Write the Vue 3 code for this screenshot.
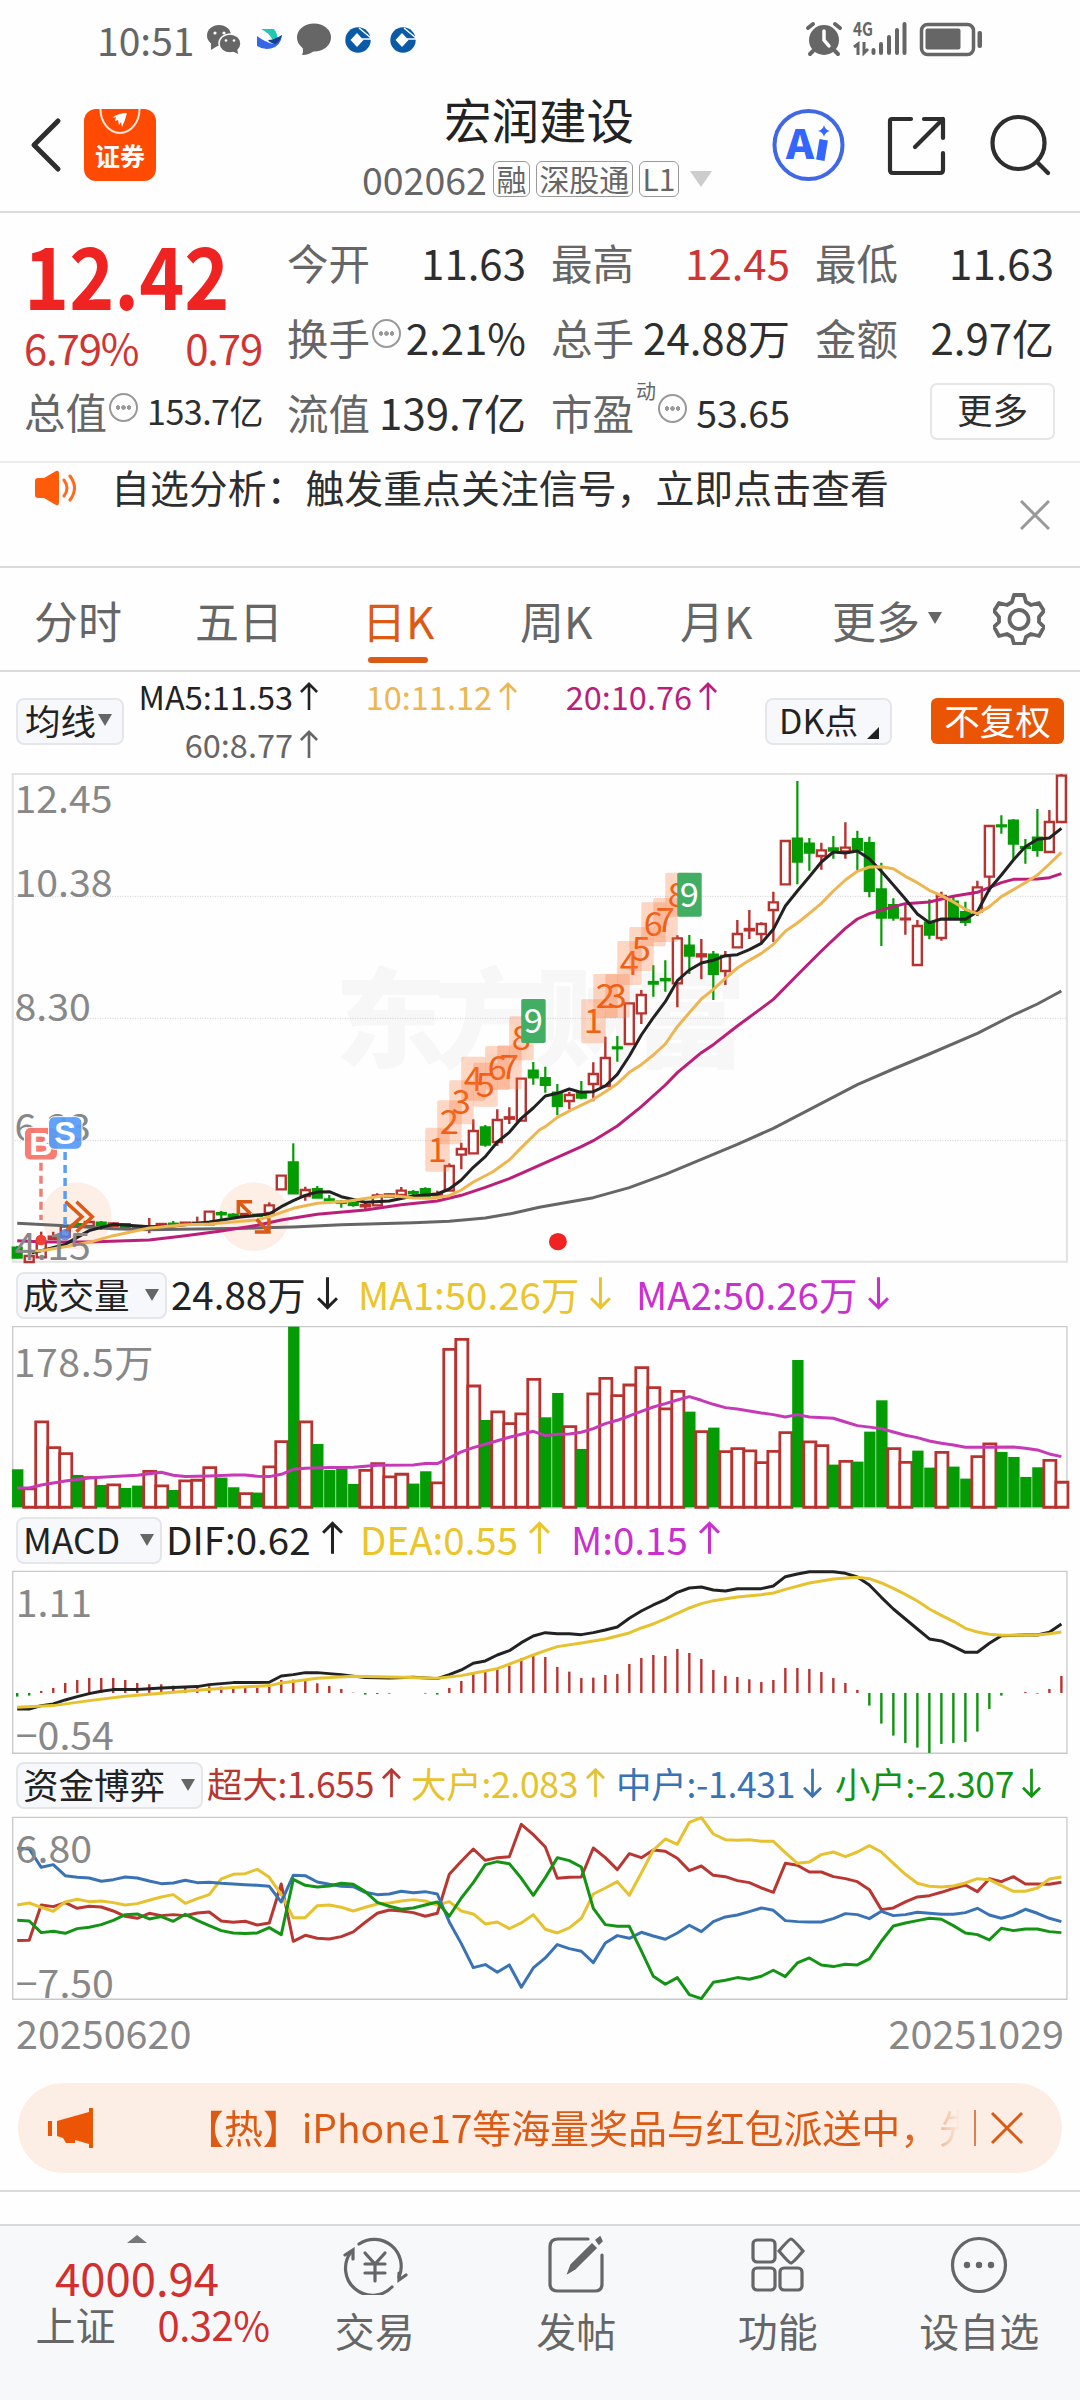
<template>
  <div class="screen">
    <div class="status">
      <span class="clock">10:51</span>
      <svg class="status-left" viewBox="0 0 220 40" width="220" height="40">
        <g fill="#666">
          <ellipse cx="12" cy="16.500" rx="12" ry="10.500" />
          <path d="M4 24 L4 31 L12 26z" />
          <ellipse cx="23" cy="24.500" rx="11" ry="9.500" stroke="#fefefe" stroke-width="1.500" />
          <path d="M25 32 L31 35 L30 29z" />
          <ellipse cx="107" cy="18.500" rx="17" ry="14" />
          <path d="M95 26 Q97 32 95 36 Q103 36 108 31z" />
        </g>
        <g fill="#fefefe">
          <circle cx="8" cy="14" r="1.600" /><circle cx="17" cy="14" r="1.600" />
          <circle cx="19" cy="21.500" r="1.300" /><circle cx="27" cy="21.500" r="1.300" />
        </g>
        <path d="M54 10 h13 q4 5 4 13 l-6 -3 q-3 -6 -11 -10z" fill="#21c8b4" />
        <path d="M50 17 q8 6 16 8 q4 -6 9 -9 q-1 11 -11 13.500 q-8 1.500 -14 -2.500z" fill="#3568e8" />
        <path d="M61 21 q6 0 14 -5 q-2 7 -7 9 q-5 -1 -7 -4z" fill="#173c94" />
        <g v-for="x in [151, 196]" :key="x">
          <circle :cx="x" cy="21" r="12.700" fill="#0a5aa8" />
          <path :d="`M${x - 1} 14 l6.500 7 -6.500 7 -6.500 -7z`" fill="#fefefe" />
          <path :d="`M${x + 4} 20 h10 M${x + 1} 9 L${x + 13} 19 M${x + 6} 7 L${x + 14} 15`" stroke="#fefefe" stroke-width="1.500" />
        </g>
      </svg>
      <span class="grow"></span>
      <svg viewBox="0 0 180 40" width="180" height="40">
        <circle cx="19" cy="21" r="15" fill="#666" />
        <path d="M19 12 v9 l5 6" fill="none" stroke="#fefefe" stroke-width="3.500" stroke-linecap="round" />
        <path d="M3 9 L8 5 M30 5 L35 9 M8 32 l-3 3 M30 32 l3 3" fill="none" stroke="#666" stroke-width="4" stroke-linecap="round" />
        <text x="48" y="17" font-size="19" font-weight="700" fill="#666" textLength="20" lengthAdjust="spacingAndGlyphs">4G</text>
        <path d="M49 28 l4 -3 v11 M59 23 v11 l4 -4" fill="none" stroke="#666" stroke-width="3" />
        <path d="M68.500 31 v3 M76 25 v9 M84 18 v16 M92 11 v23 M99.500 5 v29" stroke="#666" stroke-width="4" stroke-linecap="round" />
        <rect x="116.500" y="5.500" width="52" height="30" rx="6" fill="none" stroke="#666" stroke-width="3.500" />
        <rect x="120.500" y="9.500" width="35" height="21" rx="2" fill="#666" />
        <rect x="172.500" y="12" width="4.500" height="17" rx="2" fill="#666" />
      </svg>
    </div>

    <header class="header">
      <svg class="back" viewBox="0 0 32 56" width="32" height="56"><path d="M28 4 L4 28 L28 52" /></svg>
      <svg class="logo" viewBox="0 0 72 72" width="72" height="72">
        <rect width="72" height="72" rx="12" fill="#ff4a04" />
        <path d="M16.500 0 a19.500 24 0 0 0 39 0" fill="none" stroke="#ffe6dc" stroke-width="2" />
        <path d="M28 9 Q34 4 43 4 Q41 12 38 18 L37 13 L35 16 L34 11 L31 12 L32 8z" fill="#fff" />
        <text x="11" y="57" font-size="25" font-weight="700" fill="#fff">证券</text>
      </svg>
      <div class="title">
        <h1>宏润建设</h1>
        <p>002062<i>融</i><i>深股通</i><i>L1</i><b></b></p>
      </div>
      <svg class="head-icons" viewBox="0 0 290 80" width="290" height="80">
        <circle cx="38.500" cy="40" r="34" fill="none" stroke="#4068e6" stroke-width="4" />
        <text x="16" y="53.500" font-size="40" font-weight="900" fill="#3366ff" textLength="28" lengthAdjust="spacingAndGlyphs">A</text>
        <path d="M53 39 L51 51" stroke="#3366ff" stroke-width="8.500" stroke-linecap="square" />
        <path d="M54 20 Q55 25 60 26 Q55 27 54 32 Q53 27 48 26 Q53 25 54 20z" fill="#3366ff" />
        <g fill="none" stroke="#2e2e2e" stroke-width="4.200" stroke-linecap="round" stroke-linejoin="round">
          <path d="M141 14 H122 Q120 14 120 16 V65 Q120 68 123 68 H170 Q173 68 173 65 V48" />
          <path d="M154 14 H173 V33 M173 14 L145 42" />
          <circle cx="248.500" cy="38" r="26" />
          <path d="M267 57 L278 68" />
        </g>
      </svg>
    </header>

    <section class="quote">
      <div class="quote-main">
        <div class="price"><span>12.42</span></div>
        <div class="change"><span>6.79%</span><span>0.79</span></div>
        <div class="cap"><label>总值</label><em class="info"></em><span>153.7亿</span></div>
      </div>
      <div class="quote-grid">
        <div v-for="cell in cells" :key="cell.label" class="cell">
          <label>{{ cell.label }}</label>
          <sup v-if="cell.sup">{{ cell.sup }}</sup>
          <em v-if="cell.info" class="info"></em>
          <span :class="{ red: cell.red, small: cell.sup }">{{ cell.value }}</span>
        </div>
        <div class="more-wrap"><button class="more">更多</button></div>
      </div>
    </section>

    <section class="notice">
      <svg viewBox="0 0 44 36" width="44" height="36">
        <path d="M1 11 Q1 8 4 8 H10 L22 1 Q25 0 25 4 V32 Q25 36 22 35 L10 28 H4 Q1 28 1 25z" fill="#ff5b0a" />
        <path d="M30 10 q6 8 0 16 M36 6 q9 12 0 24" fill="none" stroke="#ff6a20" stroke-width="3" stroke-linecap="round" />
      </svg>
      <span class="notice-text">自选分析：触发重点关注信号，立即点击查看</span>
      <svg class="notice-close" viewBox="0 0 30 30" width="30" height="30"><path d="M1 1 L29 29 M29 1 L1 29" /></svg>
    </section>

    <nav class="tabs">
      <span v-for="tab in tabs" :key="tab" :class="{ active: tab === '日K' }">
        {{ tab }}<i v-if="tab === '更多'" class="caret"></i>
      </span>
      <svg viewBox="0 0 52 52" width="52" height="52" fill="none" stroke="#666" stroke-width="3.800" stroke-linejoin="round">
        <path d="M21 2 H31 L33 9 L38 12 L46 10 L51 18 L46 24 V29 L51 34 L46 43 L38 41 L33 44 L31 51 H21 L19 44 L14 41 L6 43 L1 34 L6 29 V24 L1 18 L6 10 L14 12 L19 9z" />
        <circle cx="26" cy="26.500" r="9.500" />
      </svg>
    </nav>

    <section class="ma-row">
      <button class="chip ma-chip">均线<i class="caret"></i></button>
      <div class="ma-values">
        <span v-for="ma in averages" :key="ma.text" :style="{ color: ma.color }">
          {{ ma.text }}<svg class="arrow" viewBox="0 0 20 32"><path :d="UP" /></svg>
        </span>
      </div>
      <button class="chip dk-chip">DK点<i class="corner"></i></button>
      <button class="adjust">不复权</button>
    </section>

    <svg class="plot candles" viewBox="0 9 3136 1473" preserveAspectRatio="none">
      <text x="972" y="867" class="mark" textLength="1195">东方财富</text>
      <path class="grid" d="M36 379 H3098 M36 745 H3098 M36 1112 H3098" />
      <rect class="frame thick" x="37" y="12" width="3061" height="1463" />
      <circle cx="223" cy="1338" r="101" fill="#fdeee6" />
      <circle cx="737" cy="1340" r="103" fill="#fdeee6" />

      <g v-for="(c, i) in candles" :key="i" :class="c[0] ? 'rise' : 'fall'">
        <path :d="`M${cx(i)} ${c[1]} V${c[2]} M${cx(i)} ${c[3]} V${c[4]}`" />
        <rect :x="cx(i) - 13" :y="c[2]" width="26" :height="c[3] - c[2]" />
      </g>
      <polyline :points="line(ma60)" class="curve" stroke="#666" />
      <polyline :points="line(ma20)" class="curve" stroke="#bb1f7a" />
      <polyline :points="line(ma5)" class="curve" stroke="#222" />
      <polyline :points="line(ma10)" class="curve" stroke="#eeb650" />

      <path class="signal" d="M190 1295 L238 1340 L190 1385 M222 1295 L268 1340 L222 1385" />
      <path class="signal" d="M692 1332 V1295 H732 M692 1295 L728 1332 M740 1386 H781 V1345 M781 1386 L745 1348" />

      <g class="count">
        <g v-for="(b, k) in counts" :key="k">
          <rect :x="cx(b[0]) - 35" :y="b[2]" width="71" height="132" rx="5" :fill="b[1] === 9 ? '#42ae64' : 'rgba(252, 122, 62, 0.3)'" />
          <text :x="cx(b[0])" :y="b[2] + 102" :fill="b[1] === 9 ? '#fff' : '#f05f14'">{{ b[1] }}</text>
        </g>
      </g>
      <g class="scale">
        <text x="42" y="130">12.45</text>
        <text x="42" y="382">10.38</text>
        <text x="42" y="752">8.30</text>
        <text x="42" y="1114">6.23</text>
        <text x="42" y="1470">4.15</text>
      </g>

      <circle cx="119" cy="1410" r="16" fill="#ef4034" />
      <circle cx="189" cy="1394" r="17" fill="#4f82e8" fill-opacity="0.85" />
      <path d="M119 1178 V1350" stroke="#ef8076" class="drop" />
      <path d="M189 1146 V1380" stroke="#5b9cf5" class="drop" />
      <g class="trade">
        <rect x="71" y="1072" width="96" height="98" rx="18" fill="#f8756a" fill-opacity="0.95" />
        <text x="119" y="1154">B</text>
        <rect x="141" y="1040" width="97" height="98" rx="18" fill="#559bf8" fill-opacity="0.92" />
        <text x="189" y="1122">S</text>
      </g>
      <circle cx="1620" cy="1415" r="26" fill="#f02222" />
    </svg>

    <div class="legend">
      <button class="chip volume-chip">成交量<i class="caret"></i></button>
      <span v-for="item in volumeLegend" :key="item.text" :style="{ color: item.color, width: item.width + 'px' }">
        {{ item.text }}<svg class="arrow" viewBox="0 0 20 32"><path :d="item.up ? UP : DOWN" /></svg>
      </span>
    </div>
    <svg class="plot sub" viewBox="0 198 3136 548" preserveAspectRatio="none">
      <rect class="frame" x="37" y="200" width="3061" height="544" />
      <rect
        v-for="(v, i) in volumes"
        :key="i"
        :class="v[0] ? 'vol-rise' : 'vol-fall'"
        :x="cx(i) - (v[0] ? 16 : 15)"
        :y="v[1]"
        :width="v[0] ? 35 : 33"
        :height="742 - v[1]"
      />
      <polyline :points="line(volumeMa)" class="curve" stroke="#c63ab8" />
      <text x="40" y="350" class="scale" textLength="406">178.5万</text>
    </svg>

    <div class="legend">
      <button class="chip macd-chip">MACD<i class="caret"></i></button>
      <span v-for="item in macdLegend" :key="item.text" :style="{ color: item.color, width: item.width + 'px' }">
        {{ item.text }}<svg class="arrow" viewBox="0 0 20 32"><path :d="item.up ? UP : DOWN" /></svg>
      </span>
    </div>
    <svg class="plot sub" viewBox="0 186 3136 548" preserveAspectRatio="none">
      <rect class="frame" x="37" y="187" width="3061" height="546" />
      <path v-for="(y, i) in macdBars" :key="i" :d="`M${cx(i)} 552 V${y}`" class="tick" :stroke="y < 552 ? '#b9322f' : '#0d940d'" />
      <polyline :points="line(dif)" class="curve" stroke="#222" />
      <polyline :points="line(dea)" class="curve" stroke="#e6c22f" />
      <g class="scale">
        <text x="46" y="325">1.11</text>
        <text x="46" y="724">−0.54</text>
      </g>
    </svg>

    <div class="legend tight">
      <button class="chip fund-chip">资金博弈<i class="caret"></i></button>
      <span v-for="item in fundLegend" :key="item.text" :style="{ color: item.color, width: item.width + 'px' }">
        {{ item.text }}<svg class="arrow" viewBox="0 0 20 32"><path :d="item.up ? UP : DOWN" /></svg>
      </span>
    </div>
    <svg class="plot sub" viewBox="0 204 3136 548" preserveAspectRatio="none">
      <rect class="frame" x="37" y="205" width="3061" height="546" />
      <polyline :points="line(funds.huge)" class="curve" stroke="#b83733" />
      <polyline :points="line(funds.large)" class="curve" stroke="#e6c22f" />
      <polyline :points="line(funds.middle)" class="curve" stroke="#3a73b5" />
      <polyline :points="line(funds.small)" class="curve" stroke="#149414" />
      <g class="scale">
        <text x="46" y="342">6.80</text>
        <text x="46" y="746">−7.50</text>
      </g>
    </svg>

    <div class="dates"><span>20250620</span><span>20251029</span></div>

    <div class="banner">
      <svg class="horn" viewBox="0 0 46 40" width="46" height="40" fill="#ec5504">
        <path d="M0 13 h4 v15 h-4z M9 13 L41 4 V0 H45 V40 H41 V36 L27 32 V35 H18 L15 30 L9 28z" />
      </svg>
      <div class="banner-text">【热】iPhone17等海量奖品与红包派送中，先到先得</div>
      <i class="divider"></i>
      <svg viewBox="0 0 34 34" width="34" height="34"><path d="M2 2 L32 32 M32 2 L2 32" stroke="#dc5a14" stroke-width="3" /></svg>
    </div>
    <div class="rule"></div>

    <footer class="bottom">
      <div class="index">
        <i class="up-caret"></i>
        <strong>4000.94</strong>
        <p><span>上证</span><b>0.32%</b></p>
      </div>
      <div class="action">
        <svg viewBox="0 0 66 60" width="66" height="60">
          <path d="M17 9 A27 27 0 0 1 57 42 M50 52 A27 27 0 0 1 9 17" />
          <path d="M3 20 L11 15 L11 24 M64 40 L57 45 V38" />
          <path d="M23 18 L33 29 L43 18 M33 29 V46 M23 29 H43 M23 38 H43" />
        </svg>
        <span>交易</span>
      </div>
      <div class="action">
        <svg viewBox="0 0 60 60" width="60" height="60">
          <path d="M42 4 H12 Q4 4 4 12 V49 Q4 56 12 56 H49 Q56 56 56 49 V20" />
          <path d="M22 38 L25 30 L46 9 L50 13 L29 34z M50 5 L54 2 L56 6 L53 9z" fill="#666" stroke-width="1.500" />
        </svg>
        <span>发帖</span>
      </div>
      <div class="action">
        <svg viewBox="0 0 60 60" width="60" height="60">
          <rect x="5" y="5" width="22" height="22" rx="4" />
          <rect x="5" y="33" width="22" height="22" rx="4" />
          <rect x="32" y="33" width="22" height="22" rx="4" />
          <path d="M43 4 Q45 4 55 16 Q45 28 43 28 Q41 28 31 16 Q41 4 43 4z" />
        </svg>
        <span>功能</span>
      </div>
      <div class="action">
        <svg viewBox="0 0 60 60" width="60" height="60">
          <circle cx="30" cy="30" r="26.500" />
          <g fill="#666" stroke="none"><circle cx="18" cy="30" r="3.200" /><circle cx="30" cy="30" r="3.200" /><circle cx="42" cy="30" r="3.200" /></g>
        </svg>
        <span>设自选</span>
      </div>
    </footer>
  </div>
</template>

<script setup>
const UP = 'M10 31 V2 M1 11 L10 2 L19 11';
const DOWN = 'M10 1 V30 M1 21 L10 30 L19 21';

const cells = [
  { label: '今开', value: '11.63' },
  { label: '最高', value: '12.45', red: true },
  { label: '最低', value: '11.63' },
  { label: '换手', value: '2.21%', info: true },
  { label: '总手', value: '24.88万' },
  { label: '金额', value: '2.97亿' },
  { label: '流值', value: '139.7亿' },
  { label: '市盈', value: '53.65', sup: '动', info: true }
];

const tabs = ['分时', '五日', '日K', '周K', '月K', '更多'];

const averages = [
  { text: 'MA5:11.53', color: '#222' },
  { text: '10:11.12', color: '#eeb650' },
  { text: '20:10.76', color: '#bb1f7a' },
  { text: '60:8.77', color: '#666' }
];

const volumeLegend = [
  { text: '24.88万', color: '#222', width: 187 },
  { text: 'MA1:50.26万', color: '#eac52c', width: 278 },
  { text: 'MA2:50.26万', color: '#c930cf', width: 270 }
];

const macdLegend = [
  { text: 'DIF:0.62', color: '#222', width: 194, up: true },
  { text: 'DEA:0.55', color: '#eac52c', width: 211, up: true },
  { text: 'M:0.15', color: '#c930cf', width: 160, up: true }
];

const fundLegend = [
  { text: '超大:1.655', color: '#b83733', width: 204, up: true },
  { text: '大户:2.083', color: '#e6c22f', width: 205, up: true },
  { text: '中户:-1.431', color: '#3a73b5', width: 219 },
  { text: '小户:-2.307', color: '#149414', width: 210 }
];

// drawing units: about three per pixel, one trading day every 34.85
const cx = (i) => +(50 + 34.85 * i).toFixed(1);

const line = (points) => points
  .map((p, i) => (Array.isArray(p) ? `${cx(p[0])},${p[1]}` : `${cx(i)},${p}`))
  .join(' ');

// [rise, high, body top, body bottom, low]
const candles = [
  [0, 1428, 1433, 1463, 1465], [1, 1458, 1458, 1476, 1476], [1, 1385, 1415, 1462, 1462], [1, 1385, 1400, 1407, 1410],
  [1, 1352, 1370, 1400, 1400], [0, 1352, 1362, 1370, 1372], [1, 1355, 1356, 1368, 1368], [0, 1353, 1358, 1367, 1380],
  [1, 1358, 1360, 1369, 1370], [0, 1360, 1362, 1374, 1376], [0, 1366, 1368, 1373, 1376], [1, 1344, 1370, 1372, 1390],
  [1, 1360, 1362, 1368, 1368], [0, 1353, 1361, 1367, 1370], [1, 1357, 1358, 1364, 1364], [1, 1340, 1358, 1362, 1362],
  [1, 1325, 1325, 1363, 1363], [0, 1323, 1329, 1333, 1347], [0, 1330, 1334, 1338, 1347], [1, 1330, 1332, 1338, 1338],
  [0, 1332, 1334, 1338, 1340], [1, 1297, 1306, 1329, 1329], [1, 1216, 1217, 1258, 1258], [0, 1120, 1177, 1270, 1270],
  [1, 1250, 1260, 1278, 1292], [0, 1248, 1257, 1283, 1284], [0, 1275, 1288, 1291, 1296], [0, 1290, 1295, 1299, 1313],
  [0, 1295, 1299, 1305, 1310], [1, 1297, 1305, 1309, 1320], [1, 1270, 1276, 1306, 1308], [1, 1270, 1273, 1280, 1280],
  [1, 1251, 1262, 1275, 1275], [0, 1260, 1266, 1270, 1277], [0, 1252, 1257, 1278, 1280], [1, 1262, 1272, 1276, 1276],
  [1, 1180, 1188, 1262, 1262], [1, 1118, 1137, 1154, 1198], [1, 1048, 1083, 1150, 1150], [0, 1065, 1072, 1124, 1130],
  [1, 1018, 1050, 1116, 1128], [1, 1012, 1042, 1046, 1062], [1, 925, 926, 1052, 1052], [0, 876, 902, 922, 944],
  [0, 890, 924, 945, 968], [0, 942, 968, 1008, 1036], [1, 965, 975, 993, 1018], [0, 933, 968, 983, 988],
  [1, 877, 912, 942, 994], [1, 800, 864, 948, 948], [0, 798, 832, 835, 875], [1, 700, 700, 822, 822],
  [1, 660, 675, 730, 762], [0, 586, 636, 641, 680], [0, 571, 627, 631, 665], [1, 496, 505, 640, 712],
  [0, 495, 527, 557, 612], [1, 507, 553, 559, 628], [0, 543, 554, 612, 690], [1, 543, 558, 603, 645],
  [1, 450, 492, 532, 532], [1, 420, 477, 481, 507], [1, 457, 462, 492, 520], [1, 365, 397, 420, 516],
  [1, 212, 213, 343, 343], [0, 33, 206, 275, 343], [0, 204, 221, 248, 302], [1, 218, 241, 258, 299],
  [0, 198, 235, 242, 266], [1, 157, 233, 244, 266], [0, 182, 207, 240, 300], [0, 200, 219, 363, 382],
  [0, 278, 358, 443, 528], [0, 385, 405, 443, 452], [1, 400, 446, 448, 494], [1, 450, 468, 585, 588],
  [0, 388, 458, 494, 508], [1, 365, 378, 504, 512], [0, 375, 395, 443, 448], [0, 395, 426, 456, 468],
  [1, 332, 352, 425, 438], [1, 167, 168, 320, 365], [0, 136, 166, 169, 191], [0, 147, 152, 221, 270],
  [0, 207, 231, 234, 281], [0, 117, 203, 240, 260], [1, 120, 156, 246, 248], [1, 12, 17, 156, 156]
];

const ma5 = [
  [1.2, 1448], [2, 1442], [4, 1423], [5, 1402], [6, 1382], [8, 1363], [11, 1370], [13, 1368], [14.6, 1362], [16, 1356],
  [18.6, 1341], [20, 1336], [21, 1332], [22, 1310], [23, 1292], [24, 1276], [25, 1266], [26, 1265], [27, 1280],
  [29, 1297], [31, 1293], [33, 1278], [35, 1272], [36, 1257], [37, 1230], [38, 1192], [39, 1160], [40, 1116],
  [41, 1087], [42, 1045], [43, 1014], [44, 978], [45, 970], [46, 957], [47, 967], [48, 965], [49, 948], [50, 913],
  [51, 858], [52, 795], [53, 743], [54, 695], [55, 632], [56, 600], [57, 579], [58, 571], [59, 557], [60, 554],
  [61, 539], [62, 520], [63, 478], [64, 408], [65, 363], [66, 320], [67, 276], [68, 246], [69, 249], [70, 243],
  [71, 266], [72, 304], [73, 345], [74, 387], [75, 432], [76, 458], [77, 447], [79, 448], [80, 425], [81, 358],
  [82, 315], [83, 270], [84, 230], [85, 208], [86, 204], [87, 175]
];

const ma10 = [
  [0.5, 1444], [2, 1442], [4, 1430], [6, 1417], [8, 1397], [11, 1374], [14, 1364], [16, 1362], [20, 1350], [21, 1340],
  [23, 1315], [25, 1300], [27.5, 1294], [30.4, 1278], [31.6, 1278], [33, 1284], [34.5, 1285], [36, 1277], [37, 1260],
  [38, 1236], [39.6, 1206], [41, 1170], [42, 1133], [43.5, 1080], [44, 1070], [45, 1042], [46, 1023], [48, 988],
  [49, 965], [50, 941], [51, 907], [52, 884], [53, 855], [54, 822], [55, 770], [56, 728], [57, 687], [58, 658],
  [59, 625], [60, 594], [61, 571], [62, 550], [63, 523], [64, 484], [65, 459], [66, 430], [67, 400], [68, 363],
  [69, 330], [70, 304], [71, 291], [72, 290], [73, 296], [74, 319], [75, 338], [76, 361], [77, 377], [78, 396],
  [79, 418], [80, 431], [81, 410], [82, 380], [84, 338], [85, 315], [86, 282], [87, 247]
];

const ma20 = [
  [0, 1412], [2.3, 1416], [6.6, 1415], [11, 1410], [14, 1397], [17, 1383], [20, 1366], [22, 1350], [25, 1333],
  [29, 1320], [32, 1304], [35, 1293], [37, 1276], [39, 1252], [41, 1226], [42, 1210], [43.5, 1186], [45, 1162],
  [47, 1130], [48, 1112], [50, 1068], [52, 1010], [54, 945], [55, 908], [57, 848], [58, 824], [60, 768], [62, 715],
  [63, 688], [65, 615], [67, 543], [69, 475], [70, 447], [71, 431], [73, 410], [74, 401], [76, 396], [78, 379],
  [80, 367], [82, 338], [83, 328], [85, 327], [86, 323], [87, 311]
];

const ma60 = [
  [0, 1360], [4, 1367], [8, 1376], [11, 1379], [19, 1375], [23, 1371], [27, 1364], [33, 1358], [36, 1354],
  [39, 1344], [41.3, 1330], [43.5, 1312], [48, 1283], [51, 1253], [54, 1213], [57, 1168], [60, 1123], [63, 1075],
  [67, 1000], [70, 944], [73, 897], [76, 852], [80, 790], [83, 735], [85, 702], [87, 663]
];

// [day, number, top]
const counts = [
  [35, 1, 1073], [36, 2, 991], [37, 3, 931], [38, 4, 860], [39, 5, 878], [40, 6, 828], [41, 7, 826], [42, 8, 739], [43, 9, 687],
  [48, 1, 688], [49, 2, 612], [50, 3, 612], [51, 4, 513], [52, 5, 471], [53, 6, 397], [54, 7, 384], [55, 8, 308], [56, 9, 308]
];

// [rise, top]
const volumes = [
  [0, 628], [1, 687], [1, 486], [1, 563], [1, 581], [0, 645], [1, 653], [0, 675], [1, 675], [0, 684], [0, 677],
  [1, 634], [1, 678], [0, 690], [1, 663], [1, 661], [1, 623], [0, 653], [0, 682], [1, 701], [0, 698], [1, 621],
  [1, 545], [0, 200], [1, 486], [0, 552], [0, 630], [0, 626], [0, 672], [1, 631], [1, 611], [1, 651], [1, 643],
  [0, 671], [0, 634], [1, 669], [1, 268], [1, 238], [1, 378], [0, 480], [1, 456], [1, 491], [1, 462], [1, 358],
  [0, 472], [0, 399], [1, 500], [0, 567], [1, 402], [1, 355], [1, 407], [1, 375], [1, 323], [1, 383], [1, 447],
  [1, 394], [0, 455], [1, 515], [0, 503], [1, 575], [1, 566], [1, 573], [1, 608], [1, 574], [1, 518], [0, 300],
  [1, 546], [1, 557], [0, 614], [1, 604], [0, 605], [0, 515], [0, 421], [1, 566], [1, 607], [0, 572], [0, 623],
  [1, 577], [0, 620], [0, 656], [1, 590], [1, 552], [0, 576], [0, 591], [0, 651], [0, 622], [1, 601], [1, 667]
];

const volumeMa = [
  [0, 684], [1, 684], [2, 675], [4, 663], [6, 654], [8, 650], [10, 646], [12, 637], [13, 646], [14, 650], [16, 648],
  [18, 645], [19, 645], [20, 649], [21, 650], [22, 643], [23, 628], [24, 625], [26, 623], [28, 622], [30, 616],
  [33, 615], [34, 611], [35, 611], [36, 594], [37, 576], [38, 563], [39, 553], [41, 532], [43, 514], [44, 527],
  [45, 523], [46, 522], [47, 517], [48, 506], [49, 491], [50, 481], [51, 468], [52, 454], [53, 441], [54, 431],
  [55, 420], [56, 410], [57, 421], [58, 433], [59, 443], [60, 447], [62, 459], [63, 464], [64, 471], [65, 464],
  [66, 471], [68, 475], [69, 486], [70, 497], [72, 506], [73, 516], [74, 526], [75, 533], [76, 543], [77, 550],
  [78, 555], [79, 562], [80, 562], [83, 561], [84, 565], [85, 570], [86, 582], [87, 590]
];

const macdBars = [
  563, 560, 546, 537, 522, 513, 507, 507, 507, 513, 522, 526, 526, 530, 532, 530, 532, 533, 532, 534, 536, 530,
  513, 512, 513, 523, 531, 540, 551, 557, 555, 554, 552, 552, 554, 557, 537, 516, 492, 489, 478, 470, 448, 437,
  444, 474, 488, 507, 506, 498, 495, 465, 447, 438, 441, 420, 432, 450, 483, 501, 504, 511, 519, 513, 477, 477,
  480, 489, 507, 522, 543, 590, 644, 680, 702, 716, 732, 705, 702, 699, 668, 600, 560, 552, 549, 554, 540, 501
];

const dif = [
  [0, 600], [1, 600], [2, 590], [3, 585], [4, 573], [5, 563], [6, 554], [7, 547], [8, 542], [10, 542], [12, 537],
  [15, 533], [16, 527], [18, 521], [21, 520], [22, 501], [23, 497], [24, 491], [25, 491], [27, 497], [29, 506],
  [31, 507], [33, 505], [35, 509], [36, 497], [37, 483], [38, 463], [39, 456], [40, 438], [41, 425], [42, 401],
  [43, 381], [44, 371], [45, 374], [46, 374], [47, 377], [48, 371], [49, 363], [50, 354], [51, 328], [52, 306],
  [53, 288], [54, 272], [55, 250], [56, 237], [57, 234], [58, 243], [59, 246], [60, 239], [62, 239], [63, 231],
  [64, 203], [65, 195], [66, 188], [68, 188], [69, 193], [70, 204], [71, 228], [72, 265], [73, 300], [74, 330],
  [75, 360], [76, 390], [77, 396], [78, 412], [79, 430], [80, 430], [81, 403], [82, 380], [84, 378], [85, 378],
  [86, 370], [87, 345]
];

const dea = [
  [0, 595], [3, 590], [6, 575], [9, 562], [12, 553], [15, 544], [18, 536], [21, 530], [22, 522], [25, 508],
  [28, 502], [32, 505], [35, 508], [37, 500], [38, 493], [40, 479], [42, 452], [43, 438], [44, 425], [45, 413],
  [47, 402], [49, 390], [51, 372], [52, 357], [53, 345], [54, 330], [55, 313], [56, 297], [57, 284], [58, 275],
  [60, 264], [62, 257], [63, 252], [64, 241], [66, 222], [68, 210], [70, 205], [71, 209], [72, 222], [73, 238],
  [74, 256], [75, 276], [76, 300], [77, 319], [78, 337], [79, 358], [80, 369], [81, 376], [82, 379], [85, 378],
  [86, 374], [87, 369]
];

const funds = {
  huge: [
    575, 574, 468, 473, 461, 478, 472, 474, 486, 502, 508, 493, 500, 497, 500, 492, 489, 516, 520, 517, 528, 522,
    405, 577, 559, 568, 570, 563, 549, 520, 493, 483, 486, 491, 502, 493, 376, 337, 300, 334, 326, 323, 226, 257,
    294, 388, 385, 384, 297, 326, 362, 314, 326, 303, 307, 328, 365, 351, 379, 383, 395, 401, 417, 430, 343, 349,
    369, 369, 383, 389, 398, 422, 482, 477, 459, 444, 440, 430, 418, 408, 428, 389, 398, 383, 405, 405, 406, 400
  ],
  large: [
    468, 462, 475, 487, 459, 451, 458, 456, 461, 468, 464, 454, 444, 437, 463, 449, 437, 390, 376, 374, 361, 385,
    437, 506, 506, 470, 468, 475, 486, 475, 465, 462, 456, 452, 456, 468, 458, 486, 495, 525, 519, 539, 522, 497,
    541, 552, 537, 508, 435, 417, 398, 439, 372, 303, 270, 286, 220, 206, 255, 272, 274, 272, 277, 277, 311, 343,
    339, 317, 309, 323, 309, 290, 309, 343, 376, 403, 412, 414, 411, 402, 389, 392, 410, 427, 427, 417, 390, 384
  ],
  middle: [
    298, 300, 355, 347, 380, 385, 387, 397, 392, 384, 387, 396, 404, 402, 394, 401, 400, 403, 405, 407, 409, 412,
    459, 379, 380, 399, 406, 412, 413, 430, 437, 435, 427, 431, 428, 435, 519, 584, 656, 647, 670, 648, 715, 657,
    627, 587, 599, 607, 641, 582, 560, 568, 550, 561, 571, 552, 529, 548, 518, 504, 498, 488, 477, 484, 515, 518,
    519, 519, 509, 494, 497, 509, 487, 500, 497, 490, 493, 496, 496, 491, 478, 498, 508, 498, 481, 493, 508, 518
  ],
  small: [
    514, 516, 551, 547, 553, 539, 535, 527, 514, 497, 495, 510, 503, 517, 496, 514, 530, 545, 552, 554, 552, 536,
    557, 391, 409, 414, 411, 403, 406, 428, 460, 472, 481, 477, 468, 459, 502, 447, 401, 347, 338, 344, 388, 439,
    386, 326, 335, 354, 478, 527, 532, 532, 606, 682, 706, 686, 737, 749, 700, 694, 686, 691, 682, 664, 683, 642,
    627, 648, 653, 646, 648, 630, 577, 531, 522, 515, 508, 511, 530, 552, 557, 573, 538, 545, 540, 540, 548, 551
  ]
};
</script>

<style>
body {
  margin: 0;
  background: #fefefe;
}
</style>

<style scoped>
.screen {
  width: 1080px;
  height: 2400px;
  overflow: hidden;
  background: #fefefe;
  color: #2e2e2e;
  font-family: "Noto Sans CJK SC", sans-serif;
  display: flex;
  flex-direction: column;
}

.screen > * {
  flex: none;
  box-sizing: border-box;
}

.screen * {
  white-space: nowrap;
}

svg {
  display: block;
  flex: none;
}

i,
em {
  font-style: normal;
}

button {
  font-family: inherit;
  padding: 0;
  color: inherit;
}

.grow {
  flex: 1;
}

.status {
  height: 78px;
  padding: 0 95px 0 97px;
  display: flex;
  align-items: center;
}

.clock {
  font-size: 39px;
  color: #666;
  line-height: 40px;
  width: 110px;
}

.header {
  height: 135px;
  border-bottom: 2px solid #dadada;
  padding-left: 30px;
  display: flex;
}

.back {
  margin-top: 39px;
  fill: none;
  stroke: #2e2e2e;
  stroke-width: 5;
  stroke-linecap: round;
  stroke-linejoin: round;
}

.logo {
  margin: 31px 0 0 22px;
}

.title {
  width: 609px;
  height: 133px;
  text-align: center;
}

.title h1 {
  margin: 14px 0 0 160px;
  font-size: 47.500px;
  font-weight: 400;
  line-height: 54px;
  color: #222;
  text-align: left;
  padding-left: 128px;
}

.title p {
  margin: 15px 0 0 206px;
  display: flex;
  align-items: center;
  gap: 6px;
  font-size: 37.500px;
  line-height: 36px;
  color: #666;
}

.title p i {
  box-sizing: border-box;
  height: 36px;
  border: 1.500px solid #999;
  border-radius: 6px;
  padding: 0 2.500px;
  font-size: 30px;
  line-height: 32px;
}

.title p b {
  margin-left: 5px;
  border: 11px solid transparent;
  border-top: 16px solid #ccc;
  border-bottom: 0;
}

.head-icons {
  margin: 27px 0 0 5px;
}

.quote {
  height: 250px;
  border-bottom: 2px solid #ececec;
  padding: 11px 26px 0 24px;
  display: flex;
}

.quote-main {
  width: 265px;
}

.price {
  height: 103px;
  color: #f02323;
  font-size: 86px;
  font-weight: 700;
  line-height: 98px;
}

.price span {
  display: inline-block;
  transform: scaleX(0.89);
  transform-origin: 0 50%;
}

.change {
  width: 238px;
  display: flex;
  justify-content: space-between;
  font-size: 42px;
  line-height: 40px;
  letter-spacing: -1.200px;
  color: #d23434;
}

.cap {
  width: 239px;
  margin-top: 22px;
  display: flex;
  align-items: center;
  line-height: 44px;
}

.cap span {
  margin-left: auto;
  font-size: 34px;
  letter-spacing: -0.500px;
}

label {
  color: #666;
  font-size: 41.500px;
}

.info {
  box-sizing: border-box;
  width: 29px;
  height: 29px;
  border: 2px solid #999;
  border-radius: 50%;
  margin: -7px 0 0 2px;
  background:
    radial-gradient(circle at 7px 50%, #999 2px, transparent 2.500px),
    radial-gradient(circle at 12.500px 50%, #999 2px, transparent 2.500px),
    radial-gradient(circle at 18px 50%, #999 2px, transparent 2.500px);
}

.quote-grid {
  flex: 1;
  display: grid;
  grid-template-columns: 239px 239px 239px;
  grid-template-rows: 75px 75px 75px;
  column-gap: 25px;
}

.cell {
  display: flex;
  align-items: center;
  font-size: 42px;
}

.cell span {
  margin-left: auto;
}

.cell .small {
  font-size: 37.500px;
}

.cell sup {
  font-size: 20px;
  line-height: 20px;
  color: #666;
  margin: -42px 0 0 2px;
}

.red {
  color: #d23434;
}

.more-wrap {
  display: flex;
  align-items: center;
  justify-content: flex-end;
}

.more {
  width: 125px;
  height: 57px;
  border: 2px solid #e6e6e6;
  border-radius: 7px;
  background: transparent;
  font-size: 35.500px;
  line-height: 46px;
  padding-bottom: 5px;
  margin: 0 -1px 0 0;
}

.notice {
  height: 105px;
  border-bottom: 2px solid #dadada;
  padding: 7px 30px 0 34px;
  display: flex;
}

.notice-text {
  margin: -3px 0 0 33px;
  font-size: 38.900px;
  line-height: 38px;
  flex: 1;
}

.notice-close {
  margin-top: 30px;
  stroke: #999;
  stroke-width: 3;
}

.tabs {
  height: 104px;
  border-bottom: 2px solid #dadada;
  padding-left: 34px;
  display: grid;
  grid-template-columns: 161px 167px 158px 160px 152px 161px 60px;
  align-items: center;
  font-size: 44px;
  line-height: 56px;
  color: #666;
}

.tabs span {
  display: flex;
  align-items: center;
  position: relative;
  margin-top: 1px;
}

.tabs .active {
  color: #dc5a14;
}

.tabs .active::after {
  content: '';
  position: absolute;
  left: 6px;
  bottom: -15px;
  width: 60px;
  height: 6px;
  border-radius: 3px;
  background: #dc5a14;
}

.caret {
  display: inline-block;
  border: 7.500px solid transparent;
  border-top: 12px solid #666;
  border-bottom: 0;
}

.tabs .caret {
  margin: -3px 0 0 8px;
}

.ma-row {
  height: 102px;
  padding: 26px 16px 0;
  display: flex;
  align-items: flex-start;
}

.chip {
  box-sizing: border-box;
  height: 47px;
  border: 2px solid #e4e6ea;
  border-radius: 8px;
  background: #f7f8fb;
  color: #222;
  font-size: 35.500px;
  line-height: 40px;
  padding: 0 6px 3px 5px;
  display: flex;
  align-items: center;
  flex: none;
}

.legend .caret {
  margin: 2px 0 0 auto;
}

.volume-chip {
  width: 151px;
}

.macd-chip {
  width: 146px;
}

.fund-chip {
  width: 187px;
}

.ma-chip {
  width: 108px;
  padding: 0 0 3px 7px;
}

.ma-chip .caret {
  margin-left: 2px;
}

.ma-values {
  margin: -26px 0 0 14px;
  display: grid;
  grid-template-columns: 180px 199px 200px;
  justify-items: end;
  font-size: 32.500px;
  line-height: 48px;
  width: 580px;
}

.ma-values span {
  display: flex;
  align-items: center;
}

.arrow {
  width: 21px;
  height: 34px;
  margin-left: 11px;
  fill: none;
  stroke: currentColor;
  stroke-width: 2.900;
}

.ma-values .arrow {
  width: 18px;
  height: 29px;
  margin-left: 7px;
}

.dk-chip {
  width: 127px;
  margin-left: 47px;
  padding: 0 0 3px 12px;
  font-size: 34px;
}

.corner {
  margin: 25px 0 0 9px;
  border-left: 12px solid transparent;
  border-bottom: 12px solid #222;
}

.adjust {
  width: 133px;
  height: 46px;
  margin-left: 39px;
  border: 0;
  border-radius: 6px;
  background: #ea5504;
  color: #fff;
  font-size: 35.500px;
  line-height: 40px;
  padding-bottom: 3px;
  flex: none;
}

.plot {
  width: 1080px;
  overflow: visible;
}

.candles {
  height: 491px;
  margin-top: -1px;
}

.sub {
  height: 182.600px;
}

.plot * {
  vector-effect: non-scaling-stroke;
}

.frame {
  fill: none;
  stroke: #c9c9c9;
  stroke-width: 1.300;
}

.thick {
  stroke: #e2e2e2;
  stroke-width: 2;
}

.grid {
  stroke: #cfcfcf;
  stroke-width: 1;
  stroke-dasharray: 1 1.500;
}

.mark {
  font-size: 325px;
  font-weight: 900;
  fill: #f7f7f7;
}

.scale {
  font-size: 114px;
  fill: #888;
}

.curve {
  fill: none;
  stroke-width: 3;
  stroke-linejoin: round;
}

.rise path,
.rise rect {
  stroke: #b9322f;
  stroke-width: 2.400;
  fill: #fefefe;
}

.fall path,
.fall rect {
  stroke: #049c04;
  stroke-width: 2.200;
  fill: #049c04;
}

.vol-rise {
  fill: #fefefe;
  stroke: #b9322f;
  stroke-width: 2.800;
}

.vol-fall {
  fill: #049c04;
}

.tick {
  stroke-width: 2.400;
}

.signal {
  fill: none;
  stroke: #dc5a14;
  stroke-width: 3.500;
}

.drop {
  stroke-width: 3.500;
  stroke-dasharray: 8 5;
}

.count text {
  font-size: 100px;
  text-anchor: middle;
}

.trade rect {
  stroke: #fff;
  stroke-width: 1;
}

.trade text {
  font-family: "Liberation Sans", sans-serif;
  font-size: 94px;
  font-weight: 700;
  fill: #fff;
  text-anchor: middle;
}

.legend {
  height: 62.400px;
  padding: 0 16px 0;
  display: flex;
  align-items: center;
  font-size: 38.500px;
  line-height: 46px;
}

.legend .chip {
  margin-right: 4px;
}

.legend span {
  display: flex;
  align-items: center;
  flex: none;
  margin-top: -4px;
}

.tight {
  height: 63px;
  font-size: 35.500px;
  letter-spacing: -0.300px;
}

.tight .arrow {
  width: 19px;
  margin-left: 8px;
}

.dates {
  height: 83px;
  padding: 9px 16px 0;
  display: flex;
  justify-content: space-between;
  font-size: 39.500px;
  line-height: 46px;
  color: #888;
}

.banner {
  height: 90px;
  margin: 0 18px;
  border-radius: 45px;
  background: #fceee4;
  padding: 0 38px 0 30px;
  display: flex;
  align-items: center;
  color: #dc5a14;
  font-size: 39px;
  line-height: 50px;
}

.banner-text {
  width: 776px;
  margin: -3px 0 0 91px;
  overflow: hidden;
  letter-spacing: -0.100px;
  mask-image: linear-gradient(90deg, #000 93%, transparent);
}

.divider {
  width: 2px;
  height: 36px;
  margin: 0 14px 0 14px;
  background: #dc8050;
}

.rule {
  height: 51px;
  margin-top: 17px;
  border-top: 2px solid #dadada;
  margin-bottom: -17px;
}

.bottom {
  height: 177px;
  border-top: 2px solid #dadada;
  background: #f7f8fa;
  display: flex;
  position: relative;
  color: #666;
}

.index {
  width: 274px;
  display: flex;
  flex-direction: column;
  align-items: center;
}

.up-caret {
  margin-top: 9px;
  border: 10px solid transparent;
  border-bottom: 8px solid #777;
  border-top: 0;
}

.index strong {
  margin-top: 8px;
  font-size: 45.500px;
  font-weight: 400;
  line-height: 50px;
  color: #d22f2f;
}

.index p {
  margin: -2px 0 0 31px;
  width: 234px;
  display: flex;
  justify-content: space-between;
  font-size: 40px;
  line-height: 50px;
}

.index b {
  font-weight: 400;
  letter-spacing: -0.500px;
  color: #d22f2f;
}

.action {
  width: 201.500px;
  padding-top: 9px;
  display: flex;
  flex-direction: column;
  align-items: center;
  font-size: 40px;
  line-height: 52px;
}

.action svg {
  fill: none;
  stroke: #666;
  stroke-width: 3.200;
  stroke-linecap: round;
  margin-bottom: 9px;
}
</style>
